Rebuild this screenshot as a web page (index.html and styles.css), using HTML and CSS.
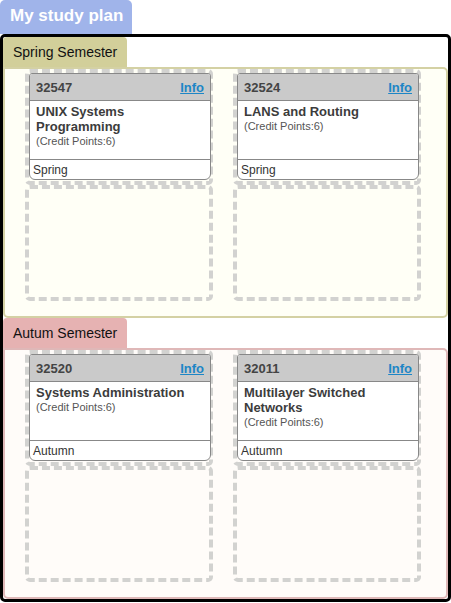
FILE: index.html
```html
<!DOCTYPE html>
<html lang="en">
<head>
<meta charset="utf-8">
<title>My study plan</title>
<link rel="stylesheet" href="styles.css">
</head>
<body>
<h1 class="plan-title">My study plan</h1>
<main class="plan">
  <section class="semester spring">
    <h2 class="semester-title">Spring Semester</h2>
    <div class="slots">
      <div class="slot">
        <article class="subject">
          <header class="subject-head"><span>32547</span><a href="#">Info</a></header>
          <div class="subject-body"><h3>UNIX Systems Programming</h3><p>(Credit Points:6)</p></div>
          <footer class="subject-foot">Spring</footer>
        </article>
      </div>
      <div class="slot">
        <article class="subject">
          <header class="subject-head"><span>32524</span><a href="#">Info</a></header>
          <div class="subject-body"><h3>LANS and Routing</h3><p>(Credit Points:6)</p></div>
          <footer class="subject-foot">Spring</footer>
        </article>
      </div>
      <div class="slot"></div>
      <div class="slot"></div>
    </div>
  </section>
  <section class="semester autumn">
    <h2 class="semester-title">Autum Semester</h2>
    <div class="slots">
      <div class="slot">
        <article class="subject">
          <header class="subject-head"><span>32520</span><a href="#">Info</a></header>
          <div class="subject-body"><h3>Systems Administration</h3><p>(Credit Points:6)</p></div>
          <footer class="subject-foot">Autumn</footer>
        </article>
      </div>
      <div class="slot">
        <article class="subject">
          <header class="subject-head"><span>32011</span><a href="#">Info</a></header>
          <div class="subject-body"><h3>Multilayer Switched Networks</h3><p>(Credit Points:6)</p></div>
          <footer class="subject-foot">Autumn</footer>
        </article>
      </div>
      <div class="slot"></div>
      <div class="slot"></div>
    </div>
  </section>
</main>
</body>
</html>
```

FILE: styles.css
```css
* {
  box-sizing: border-box;
}

body {
  margin: 0;
  background: #fff;
  color: #111;
  font-family: "Liberation Sans", Arial, sans-serif;
}

h1, h2, h3, p {
  margin: 0;
}

.plan-title {
  width: fit-content;
  padding: 6px 9px 8px 10px;
  border-radius: 5px 5px 0 0;
  background: #a0b4ea;
  color: #fff;
  font-size: 17px;
  line-height: 20px;
}

.plan {
  border: 3px solid #000;
  border-radius: 5px;
}

.semester-title {
  width: fit-content;
  padding: 5px 10px;
  border-radius: 4px 4px 0 0;
  background: var(--tab);
  font-size: 14px;
  font-weight: normal;
  line-height: 20px;
}

.spring {
  --tab: #d2cf9a;
  --edge: #d4d1a4;
  --fill: #fffff6;
}

.autumn {
  --tab: #e6b2b2;
  --edge: #dfb8b8;
  --fill: #fffcf9;
}

.slots {
  display: grid;
  grid-template-columns: repeat(auto-fill, 188px);
  column-gap: 20px;
  padding: 0 20px 15px;
  border: 2px solid var(--edge);
  border-radius: 0 5px 5px 5px;
  background: var(--fill);
}

.slot {
  min-height: 116px;
  border: 4px dashed #d2d2d0;
  border-radius: 5px;
}

/* The card overlaps the right edge of its slot. */
.subject {
  display: flex;
  flex-direction: column;
  width: calc(100% + 2px);
  height: 107px;
  overflow: hidden;
  border: 1px solid #888;
  border-radius: 3px 3px 6px 6px;
  background: #fff;
  color: #333;
}

.subject-head {
  display: flex;
  justify-content: space-between;
  padding: 4px 6px 2px;
  border-bottom: 1px solid #888;
  background: #cacaca;
  color: #444;
  font-size: 13px;
  font-weight: bold;
  line-height: 20px;
}

.subject-head a {
  color: #1d86c6;
}

.subject-body {
  flex: 1;
  padding: 3px 6px;
}

.subject-body h3 {
  color: #3c3c3c;
  font-size: 13px;
  line-height: 15px;
}

.subject-body p {
  color: #555;
  font-size: 11px;
  line-height: 15px;
}

.subject-foot {
  padding: 1px 3px 0;
  border-top: 1px solid #888;
  font-size: 12px;
  line-height: 18px;
}
```
